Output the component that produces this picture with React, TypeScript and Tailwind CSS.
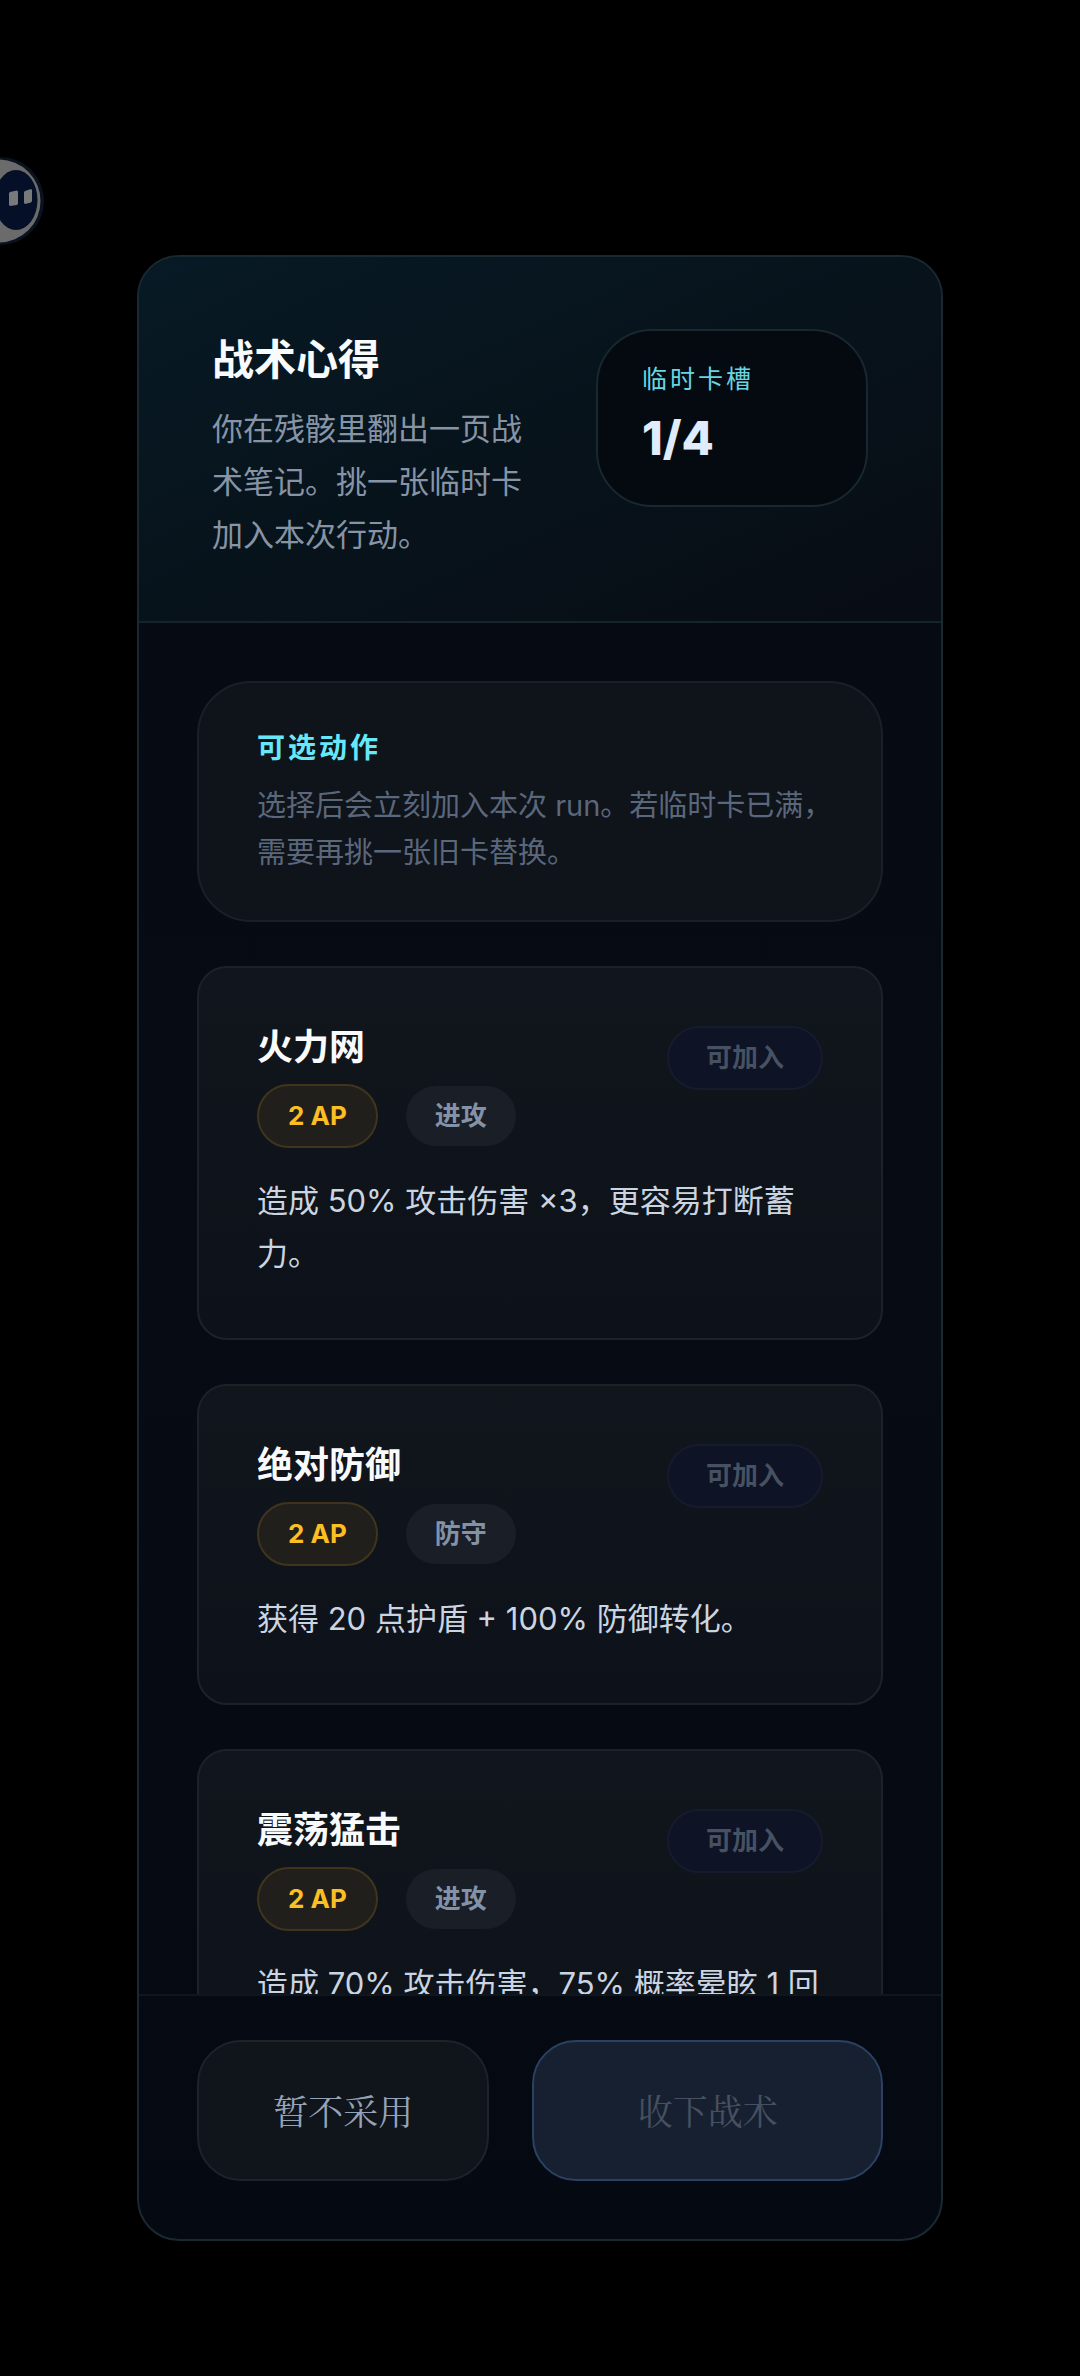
import { useState } from "react";

interface Tactic {
   id: string;
   name: string;
   cost: number;
   type: string;
   description: string;
}

const tactics: Tactic[] = [
   {
      id: "fire-net",
      name: "火力网",
      cost: 2,
      type: "进攻",
      description: "造成 50% 攻击伤害 ×3，更容易打断蓄力。",
   },
   {
      id: "absolute-guard",
      name: "绝对防御",
      cost: 2,
      type: "防守",
      description: "获得 20 点护盾 + 100% 防御转化。",
   },
   {
      id: "shock-strike",
      name: "震荡猛击",
      cost: 2,
      type: "进攻",
      description: "造成 70% 攻击伤害，75% 概率晕眩 1 回合。",
   },
];

function Avatar() {
   return (
      <svg
         className="absolute left-0 top-[156px]"
         width="46"
         height="90"
         viewBox="0 0 46 90"
         aria-hidden="true"
      >
         <circle cx="0" cy="45" r="44" fill="#0a1220" />
         <circle cx="-1" cy="45" r="41.5" fill="#6c6b6c" />
         <ellipse cx="16" cy="44" rx="21.5" ry="30" fill="#050f27" />
         <path d="M10 36l7-1.500 1 1v12l-1 1.500-7 1-1-1V37z" fill="#77797b" />
         <path d="M25 35l6-2 1 1v11l-1 1.500-6 1.500-1-1V36z" fill="#77797b" />
      </svg>
   );
}

function TacticCard({
   tactic,
   selected,
   onSelect,
}: {
   tactic: Tactic;
   selected: boolean;
   onSelect: () => void;
}) {
   return (
      <article className="shrink-0 rounded-[30px] border-2 border-[#1d2229] bg-linear-to-b from-[#11151c] to-[#0d121a] p-[58px]">
         <div className="flex items-start justify-between">
            <div>
               <h3 className="text-[36px] font-bold leading-[43px] text-slate-50">
                  {tactic.name}
               </h3>
               <div className="mt-[15px] flex items-center gap-7">
                  <span className="rounded-full border-2 border-[#40351c] bg-[#211f1b] px-[29px] text-[26px] font-bold leading-[60px] text-[#fbbf24]">
                     {tactic.cost} AP
                  </span>
                  <span className="rounded-full bg-[#191e27] px-[29px] text-[26px] font-bold leading-[60px] text-[#8492a8]">
                     {tactic.type}
                  </span>
               </div>
            </div>
            <button
               type="button"
               aria-pressed={selected}
               onClick={onSelect}
               className="rounded-full border-2 border-[#171b2d] bg-[#0e1325] px-[37px] text-[26px] font-bold leading-[60px] text-[#465162]"
            >
               可加入
            </button>
         </div>
         <p className="mt-[26px] text-[31px] leading-[53px] text-[#cbd5e1]">
            {tactic.description}
         </p>
      </article>
   );
}

export default function App() {
   const [selected, setSelected] = useState<string | null>(null);

   return (
      <div className="relative flex h-screen flex-col bg-black px-[137px] pb-[135px] pt-[255px] font-['Inter','Noto_Sans_CJK_SC',sans-serif]">
         <Avatar />
         <main
            lang="zh-CN"
            className="flex min-h-0 flex-1 flex-col overflow-hidden rounded-[42px] border-2 border-[#1a2930] bg-linear-to-b from-[#060a12] via-[#070c14] to-[#050a12]"
         >
            <header className="flex items-start justify-between gap-9 border-b-2 border-[#15242b] bg-linear-to-br from-[#071a25] via-[#07131b] to-[#080c14] px-[73px] pb-[60px] pt-[72px]">
               <div className="min-w-0 flex-1">
                  <h1 className="text-[42px] font-bold leading-[62px] text-slate-50">
                     战术心得
                  </h1>
                  <p className="mt-[11px] max-w-[320px] text-[31px] leading-[53px] text-[#8694a6]">
                     你在残骸里翻出一页战术笔记。挑一张临时卡加入本次行动。
                  </p>
               </div>
               <div className="w-[272px] shrink-0 rounded-[56px] border-2 border-[#17282e] bg-[#050a11] px-11 pb-[33px] pt-[29px]">
                  <p className="text-[25px] leading-[38px] tracking-[3px] text-[#67d5e2]">
                     临时卡槽
                  </p>
                  <p className="mt-1.5 text-[47px] font-extrabold leading-[68px] text-[#e0ecfb]">
                     1/4
                  </p>
               </div>
            </header>

            <section className="flex min-h-0 flex-1 flex-col gap-11 overflow-hidden px-[58px] pt-[58px]">
               <div className="shrink-0 rounded-[54px] border-2 border-[#1b2027] bg-[#0f131a] py-11 pl-[58px] pr-10">
                  <h2 className="text-[28px] font-bold leading-[42px] tracking-[3px] text-[#67e8f9]">
                     可选动作
                  </h2>
                  <p className="mt-[13px] text-[29px] leading-[47px] text-[#5b677b]">
                     选择后会立刻加入本次 run。若临时卡已满，需要再挑一张旧卡替换。
                  </p>
               </div>
               {tactics.map((tactic) => (
                  <TacticCard
                     key={tactic.id}
                     tactic={tactic}
                     selected={selected === tactic.id}
                     onSelect={() => setSelected(tactic.id)}
                  />
               ))}
            </section>

            <footer className="grid grid-cols-[1fr_1.2fr] gap-[43px] border-t-2 border-[#10161d] px-[58px] pb-[58px] pt-11 font-['Noto_Serif_CJK_SC','Liberation_Serif','Noto_Sans_CJK_SC',serif] text-[35px]">
               <button
                  type="button"
                  onClick={() => setSelected(null)}
                  className="rounded-[44px] border-2 border-[#1e2229] bg-[#10141b] py-[42px] leading-[53px] text-[#94a3b8]"
               >
                  暂不采用
               </button>
               <button
                  type="button"
                  disabled={!selected}
                  className="rounded-[44px] border-2 border-[#2a4163] bg-[#172030] py-[42px] leading-[53px] text-[#465060]"
               >
                  收下战术
               </button>
            </footer>
         </main>
      </div>
   );
}
